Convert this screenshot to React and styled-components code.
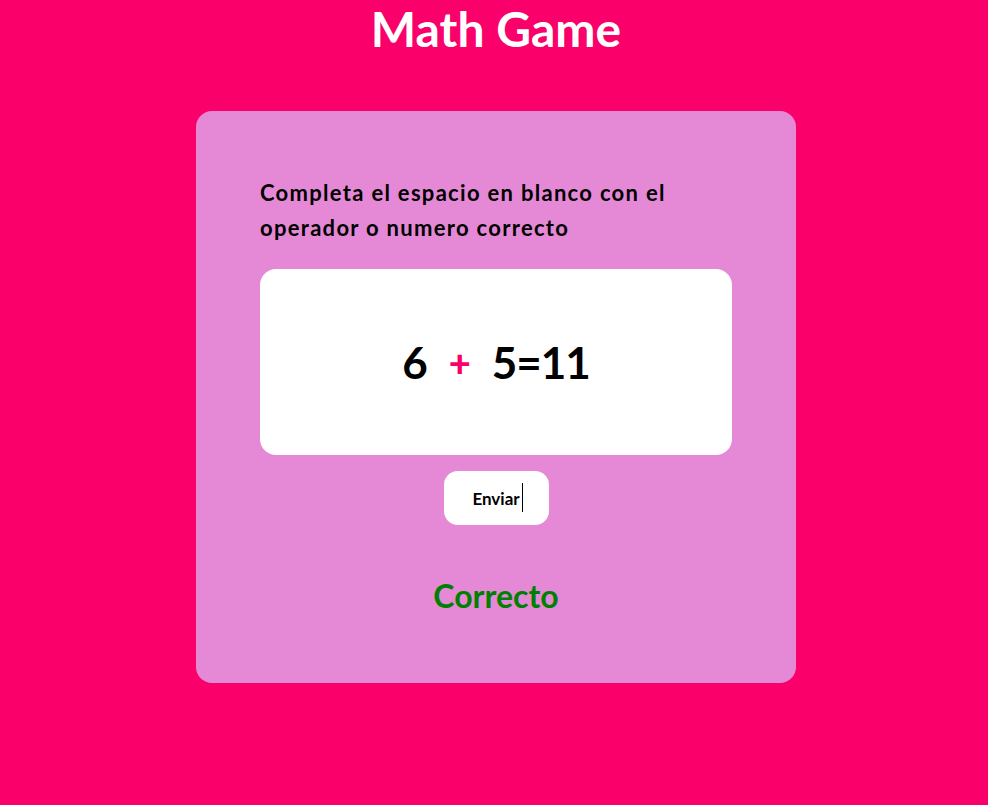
import React from 'react';
import styled, { createGlobalStyle } from 'styled-components';

const GlobalStyle = createGlobalStyle`
  html, body {
    margin: 0;
    background: #f9006a;
    font-family: Lato, "Open Sans", sans-serif;
  }
`;

const Page = styled.div`
  display: flex;
  flex-direction: column;
  align-items: center;
  min-height: 805px;
  padding-left: 4px;
`;

const Title = styled.h1`
  margin: 0;
  color: #fff;
  font-size: 48px;
  line-height: 58px;
  font-weight: 700;
`;

const Card = styled.div`
  margin-top: 53px;
  width: 600px;
  box-sizing: border-box;
  padding: 64px 64px 69px;
  background: #e589d6;
  border-radius: 16px;
  display: flex;
  flex-direction: column;
  align-items: center;
`;

const Prompt = styled.p`
  margin: 0 0 24px;
  align-self: stretch;
  font-size: 22px;
  line-height: 35px;
  font-weight: 700;
  letter-spacing: 1.3px;
  color: #000;
`;

const Board = styled.div`
  align-self: stretch;
  height: 186px;
  background: #fff;
  border-radius: 16px;
  display: flex;
  align-items: center;
  justify-content: center;
  gap: 22px;
  font-size: 44px;
  font-weight: 700;
  letter-spacing: -1px;
  color: #000;
`;

const Token = styled.span`
  color: ${p => (p.$accent ? '#f9006a' : '#000')};
  font-size: ${p => (p.$accent ? '38px' : 'inherit')};
  font-weight: ${p => (p.$accent ? 900 : 700)};
`;

const Send = styled.button`
  margin-top: 16px;
  width: 105px;
  height: 54px;
  border: none;
  border-radius: 14px;
  background: #fff;
  font-family: inherit;
  font-size: 17px;
  font-weight: 700;
  color: #000;
  display: flex;
  align-items: center;
  justify-content: center;
  position: relative;
`;

const Caret = styled.span`
  position: absolute;
  left: 78px;
  top: 12px;
  width: 1px;
  height: 29px;
  background: #000;
`;

const Result = styled.div`
  margin-top: 53px;
  font-size: 32px;
  line-height: 36px;
  font-weight: 700;
  color: #008000;
`;

export default function App() {
  return (
    <Page>
      <GlobalStyle />
      <Title>Math Game</Title>
      <Card>
        <Prompt>Completa el espacio en blanco con el operador o numero correcto</Prompt>
        <Board>
          <Token>6</Token>
          <Token $accent>+</Token>
          <Token>5=11</Token>
        </Board>
        <Send>
          Enviar
          <Caret />
        </Send>
        <Result>Correcto</Result>
      </Card>
    </Page>
  );
}
